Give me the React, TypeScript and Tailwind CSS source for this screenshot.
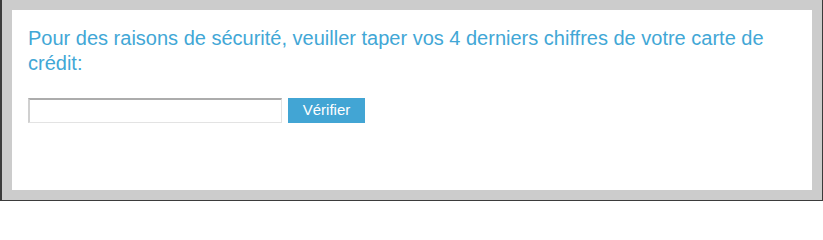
export default function App() {
  return (
    <div className="h-[201px] w-[823px] bg-[#3b3b3b] pl-[2px] pr-px pb-px">
      <div className="h-full bg-[#cccccc] p-[10px]">
        <div className="h-full bg-white px-[16px] pt-[16px] font-['Liberation_Sans',Arial,sans-serif]">
          <p className="text-[20px] leading-[25px] text-[#42a7d6]">
            Pour des raisons de sécurité, veuiller taper vos 4 derniers chiffres de votre carte de crédit:
          </p>
          <div className="mt-[22px] flex items-center gap-[6px]">
            <input
              type="text"
              className="h-[25px] w-[254px] border border-[#e3e3e3] border-t-2 border-l-2 border-t-[#acacac] border-l-[#d0d0d0] bg-white outline-none"
            />
            <button className="h-[25px] w-[77px] bg-[#42a5d4] text-[15px] text-white">
              Vérifier
            </button>
          </div>
        </div>
      </div>
    </div>
  );
}
